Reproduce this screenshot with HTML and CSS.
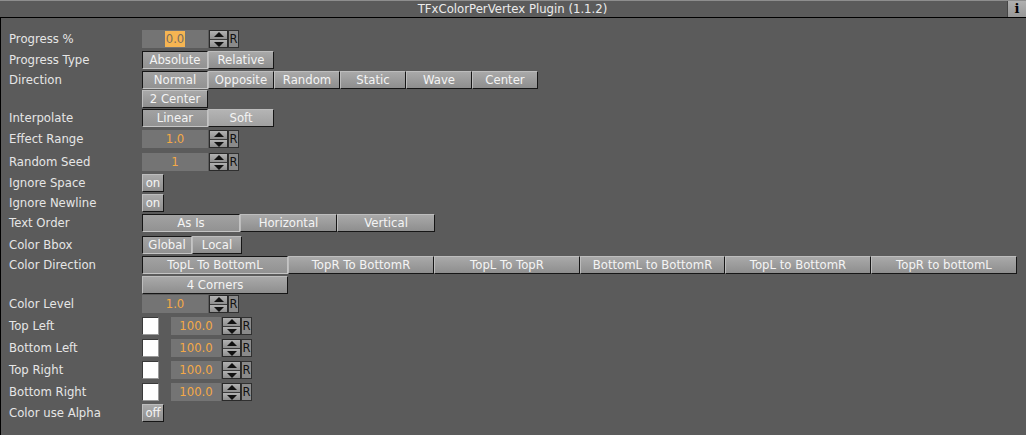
FILE: index.html
```html
<!DOCTYPE html>
<html>
<head>
<meta charset="utf-8">
<link rel="stylesheet" href="styles.css">
</head>
<body>
<div class="panel">
  <div class="titlebar">
    <div class="title">TFxColorPerVertex Plugin (1.1.2)</div>
    <div class="info">i</div>
  </div>
  <div class="content">
    <div class="row r21"><div class="label">Progress %</div><div class="ctrl"><div class="field"><span class="sel">0.0</span></div><div class="spin"><span class="up"></span><span class="down"></span></div><div class="rbtn">R</div></div></div>
    <div class="row r20"><div class="label">Progress Type</div><div class="ctrl"><div class="btn on w66">Absolute</div><div class="btn w66">Relative</div></div></div>
    <div class="row r38"><div class="label">Direction</div><div class="ctrl wrap"><div class="btn on w66">Normal</div><div class="btn w66">Opposite</div><div class="btn w66">Random</div><div class="btn w66">Static</div><div class="btn w66">Wave</div><div class="btn w66">Center</div><div class="break"></div><div class="btn w66 row2">2 Center</div></div></div>
    <div class="row r21"><div class="label">Interpolate</div><div class="ctrl"><div class="btn on w66">Linear</div><div class="btn hi w66">Soft</div></div></div>
    <div class="row r23"><div class="label">Effect Range</div><div class="ctrl"><div class="field">1.0</div><div class="spin"><span class="up"></span><span class="down"></span></div><div class="rbtn">R</div></div></div>
    <div class="row r21"><div class="label">Random Seed</div><div class="ctrl"><div class="field">1</div><div class="spin"><span class="up"></span><span class="down"></span></div><div class="rbtn">R</div></div></div>
    <div class="row r20"><div class="label">Ignore Space</div><div class="ctrl"><div class="btn tog">on</div></div></div>
    <div class="row r20"><div class="label">Ignore Newline</div><div class="ctrl"><div class="btn tog">on</div></div></div>
    <div class="row r22"><div class="label">Text Order</div><div class="ctrl"><div class="btn on w98">As Is</div><div class="btn w97">Horizontal</div><div class="btn w98">Vertical</div></div></div>
    <div class="row r20"><div class="label">Color Bbox</div><div class="ctrl"><div class="btn on w50">Global</div><div class="btn w50">Local</div></div></div>
    <div class="row r39"><div class="label">Color Direction</div><div class="ctrl wrap"><div class="btn on w146">TopL To BottomL</div><div class="btn w146">TopR To BottomR</div><div class="btn w146">TopL To TopR</div><div class="btn w145">BottomL to BottomR</div><div class="btn w146">TopL to BottomR</div><div class="btn w146">TopR to bottomL</div><div class="break"></div><div class="btn w146 row2b">4 Corners</div></div></div>
    <div class="row r22"><div class="label">Color Level</div><div class="ctrl"><div class="field">1.0</div><div class="spin"><span class="up"></span><span class="down"></span></div><div class="rbtn">R</div></div></div>
    <div class="row r22"><div class="label">Top Left</div><div class="ctrl"><div class="swatch"></div><div class="field small">100.0</div><div class="spin"><span class="up"></span><span class="down"></span></div><div class="rbtn">R</div></div></div>
    <div class="row r22"><div class="label">Bottom Left</div><div class="ctrl"><div class="swatch"></div><div class="field small">100.0</div><div class="spin"><span class="up"></span><span class="down"></span></div><div class="rbtn">R</div></div></div>
    <div class="row r22"><div class="label">Top Right</div><div class="ctrl"><div class="swatch"></div><div class="field small">100.0</div><div class="spin"><span class="up"></span><span class="down"></span></div><div class="rbtn">R</div></div></div>
    <div class="row r21"><div class="label">Bottom Right</div><div class="ctrl"><div class="swatch"></div><div class="field small">100.0</div><div class="spin"><span class="up"></span><span class="down"></span></div><div class="rbtn">R</div></div></div>
    <div class="row r20"><div class="label">Color use Alpha</div><div class="ctrl"><div class="btn tog">off</div></div></div>
  </div>
</div>
</body>
</html>
```
FILE: styles.css
```css
html, body {
  margin: 0;
  padding: 0;
}
body {
  width: 1026px;
  height: 435px;
  overflow: hidden;
  background: #5b5b5b;
  font-family: "DejaVu Sans", Tahoma, sans-serif;
  font-size: 11.7px;
  color: #e6e6e6;
}
.panel {
  display: flex;
  flex-direction: column;
  height: 435px;
}
.titlebar {
  display: flex;
  height: 16px;
  border-top: 1px solid #8e8e8e;
  border-bottom: 1px solid #000;
  background: #5b5b5b;
}
.title {
  flex: 1;
  text-align: center;
  line-height: 16px;
  padding-left: 18px;
  color: #ececec;
}
.info {
  width: 18px;
  background: linear-gradient(#b0b0b0, #989898);
  border-left: 1px solid #444;
  color: #000;
  font-family: "DejaVu Serif", serif;
  font-weight: bold;
  font-size: 13px;
  line-height: 16px;
  text-align: center;
}
.content {
  flex: 1;
  border-left: 1px solid #000;
  padding: 12px 0 0 8px;
}
.row {
  display: flex;
  align-items: flex-start;
}
.r20 { height: 20px; }
.r21 { height: 21px; }
.r22 { height: 22px; }
.r23 { height: 23px; }
.r38 { height: 38px; }
.r39 { height: 39px; }
.label {
  width: 133px;
  flex: none;
  line-height: 18px;
  white-space: nowrap;
}
.ctrl {
  display: flex;
  align-items: flex-start;
}
.ctrl.wrap {
  flex-wrap: wrap;
  width: 880px;
}
.break {
  flex-basis: 100%;
  height: 1px;
}
.btn {
  box-sizing: border-box;
  height: 18px;
  line-height: 16px;
  text-align: center;
  color: #f4f4f4;
  background: linear-gradient(#a9a9a9, #8e8e8e);
  border-top: 1px solid #bdbdbd;
  border-left: 1px solid #bdbdbd;
  border-right: 1px solid #161616;
  border-bottom: 1px solid #161616;
  white-space: nowrap;
}
.btn.on {
  border-top: 1px solid #161616;
  border-left: 1px solid #161616;
  border-right: 1px solid #c4c4c4;
  border-bottom: 1px solid #c4c4c4;
  background: linear-gradient(#a2a2a2, #929292);
}
.btn.hi {
  background: linear-gradient(#b4b4b4, #a0a0a0);
}
.w50 { width: 50px; }
.w66 { width: 66px; }
.w97 { width: 97px; }
.w98 { width: 98px; }
.w145 { width: 145px; }
.w146 { width: 146px; }
.tog { width: 22px; }
.row2 { margin-top: 0; }
.row2b { margin-top: 1px; }
.field {
  box-sizing: border-box;
  width: 66px;
  height: 18px;
  background: #747474;
  color: #f3a947;
  text-align: center;
  line-height: 18px;
}
.field.small {
  width: 50px;
}
.sel {
  background: #f6b552;
  color: #7a6e60;
  padding: 1px 1px;
}
.spin {
  box-sizing: border-box;
  width: 19px;
  height: 18px;
  margin-left: 1px;
  display: flex;
  flex-direction: column;
  border: 1px solid #2a2a2a;
  background: #8e8e8e;
}
.spin span {
  flex: 1;
  position: relative;
  background: linear-gradient(#b2b2b2, #8e8e8e);
}
.spin .up {
  border-bottom: 1px solid #3a3a3a;
}
.spin span::after {
  content: "";
  position: absolute;
  left: 4px;
  width: 0;
  height: 0;
  border-left: 5px solid transparent;
  border-right: 5px solid transparent;
}
.spin .up::after {
  top: 1px;
  border-bottom: 5px solid #111;
}
.spin .down::after {
  top: 2px;
  border-top: 5px solid #111;
}
.rbtn {
  box-sizing: border-box;
  width: 11px;
  height: 18px;
  background: #8a8a8a;
  border: 1px solid #303030;
  color: #111;
  line-height: 16px;
  font-size: 11.5px;
  text-align: center;
  overflow: hidden;
}
.swatch {
  box-sizing: border-box;
  width: 17px;
  height: 18px;
  background: #fff;
  border-top: 1px solid #3a3a3a;
  border-left: 1px solid #3a3a3a;
  border-right: 1px solid #9a9a9a;
  border-bottom: 1px solid #9a9a9a;
  margin-right: 12px;
}
```
